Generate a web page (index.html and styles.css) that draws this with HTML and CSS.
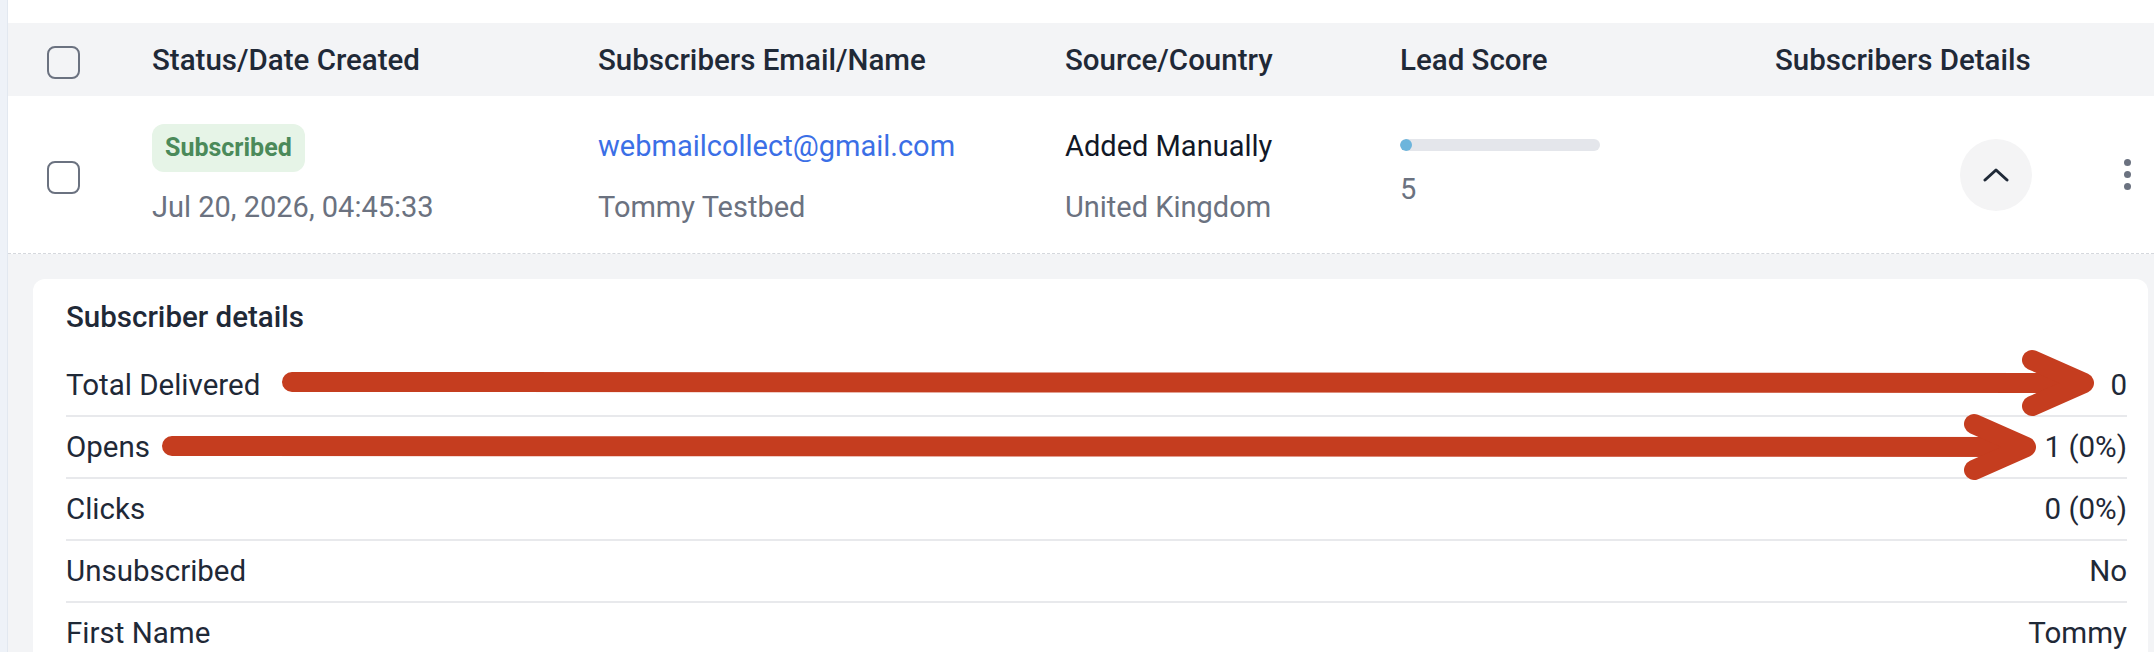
FILE: index.html
```html
<!DOCTYPE html>
<html lang="en">
<head>
    <meta charset="UTF-8">
    <meta name="viewport" content="width=device-width, initial-scale=1.0">
    <title>Subscribers</title>
    <link rel="stylesheet" href="styles.css">
</head>
<body>
    <div class="page">
        <aside class="rail"></aside>

        <main class="content">
            <div class="row head">
                <div class="cell check"><span class="box"></span></div>
                <div class="cell">Status/Date Created</div>
                <div class="cell">Subscribers Email/Name</div>
                <div class="cell">Source/Country</div>
                <div class="cell">Lead Score</div>
                <div class="cell">Subscribers Details</div>
                <div class="cell"></div>
            </div>

            <div class="row item">
                <div class="cell check"><span class="box"></span></div>
                <div class="cell stack">
                    <div class="first"><span class="badge">Subscribed</span></div>
                    <div class="second">Jul 20, 2026, 04:45:33</div>
                </div>
                <div class="cell stack">
                    <div class="first email">webmailcollect@gmail.com</div>
                    <div class="second">Tommy Testbed</div>
                </div>
                <div class="cell stack">
                    <div class="first source">Added Manually</div>
                    <div class="second">United Kingdom</div>
                </div>
                <div class="cell score">
                    <div class="bar"><span class="fill" style="width: 6%"></span></div>
                    <div class="value">5</div>
                </div>
                <div class="cell toggle">
                    <button type="button" class="round" aria-label="Collapse">
                        <svg width="26" height="14" viewBox="0 0 26 14">
                            <polyline points="2,12 13,2 24,12" fill="none" stroke="#1f2937" stroke-width="3" stroke-linecap="round" stroke-linejoin="round"/>
                        </svg>
                    </button>
                </div>
                <div class="cell more">
                    <span class="dot"></span>
                    <span class="dot"></span>
                    <span class="dot"></span>
                </div>
            </div>

            <section class="expand">
                <div class="details">
                    <h2>Subscriber details</h2>
                    <div class="stat"><span>Total Delivered</span><span>0</span></div>
                    <div class="stat"><span>Opens</span><span>1 (0%)</span></div>
                    <div class="stat"><span>Clicks</span><span>0 (0%)</span></div>
                    <div class="stat"><span>Unsubscribed</span><span>No</span></div>
                    <div class="stat"><span>First Name</span><span>Tommy</span></div>
                </div>
            </section>
        </main>

        <!-- annotation arrows drawn over the details card -->
        <svg class="marks" width="2154" height="652" viewBox="0 0 2154 652">
            <g fill="none" stroke="#c53d1f" stroke-width="20" stroke-linecap="round" stroke-linejoin="round">
                <path d="M292 382 L2080 383"/>
                <path d="M2032 360 L2084 383 L2032 406"/>
                <path d="M172 446 L2022 447"/>
                <path d="M1974 424 L2026 447 L1974 470"/>
            </g>
        </svg>
    </div>
</body>
</html>
```

FILE: styles.css
```css
:root {
    --ink: #1f2937;
    --muted: #6b7280;
    --band: #f3f4f6;
    --line: #e8e9ec;
    --blue: #3b6fe6;
    --arrow: #c53d1f;
}

* {
    margin: 0;
    padding: 0;
    box-sizing: border-box;
}

body {
    font-family: Roboto, "Liberation Sans", sans-serif;
    font-size: 29px;
    line-height: 34px;
    color: var(--ink);
    background: #fff;
}

.page {
    display: flex;
    position: relative;
    height: 100vh;
    overflow: hidden;
}

.rail {
    flex: none;
    width: 8px;
    background: #eef2f8;
    border-right: 1px solid #e2e8f0;
}

.content {
    flex: 1;
    display: flex;
    flex-direction: column;
    padding-top: 23px;
}

.row {
    display: grid;
    grid-template-columns: 144px 446px 467px 335px 375px 257px 1fr;
}

.head {
    flex: none;
    height: 73px;
    align-items: center;
    background: var(--band);
    font-size: 29.5px;
    font-weight: 500;
}

.check {
    padding-left: 39px;
    padding-top: 6px;
}

.box {
    display: block;
    width: 33px;
    height: 33px;
    border: 2px solid var(--muted);
    border-radius: 8px;
}

.item {
    flex: none;
    height: 158px;
    border-bottom: 1px dashed #d5d8dd;
    align-items: start;
}

.item .check {
    align-self: center;
}

.stack {
    padding-top: 25px;
}

.stack .first {
    height: 48px;
    line-height: 50px;
}

.stack .second {
    margin-top: 21px;
    color: var(--muted);
}

.badge {
    display: inline-flex;
    align-items: center;
    height: 48px;
    padding: 0 13px;
    border-radius: 12px;
    background: #e6f4e7;
    color: #4b8a5a;
    font-size: 25px;
    font-weight: 700;
}

.email {
    color: var(--blue);
}

.source {
    color: #111827;
}

.score {
    padding-top: 43px;
}

.bar {
    width: 200px;
    height: 12px;
    border-radius: 6px;
    background: #e4e6eb;
    overflow: hidden;
}

.fill {
    display: block;
    height: 100%;
    border-radius: 6px;
    background: #6db5dc;
}

.score .value {
    margin-top: 21px;
    color: var(--muted);
}

.toggle {
    align-self: center;
    justify-self: end;
}

.round {
    display: flex;
    align-items: center;
    justify-content: center;
    width: 72px;
    height: 72px;
    border: none;
    border-radius: 50%;
    background: #f4f4f5;
    cursor: pointer;
}

.more {
    align-self: center;
    justify-self: end;
    padding-right: 23px;
    display: flex;
    flex-direction: column;
    gap: 5px;
}

.dot {
    width: 7px;
    height: 7px;
    border-radius: 50%;
    background: var(--muted);
}

.expand {
    flex: 1;
    display: flex;
    flex-direction: column;
    background: var(--band);
    padding: 25px 6px 0 25px;
}

.details {
    flex: 1;
    background: #fff;
    border-radius: 12px 12px 0 0;
    padding: 21px 21px 0 33px;
}

.details h2 {
    font-size: 29.5px;
    font-weight: 500;
    line-height: 34px;
    margin-bottom: 21px;
}

.stat {
    display: flex;
    justify-content: space-between;
    padding: 13px 0;
    border-bottom: 2px solid var(--line);
    font-size: 29.5px;
}

.marks {
    position: absolute;
    top: 0;
    left: 0;
    pointer-events: none;
}
```
